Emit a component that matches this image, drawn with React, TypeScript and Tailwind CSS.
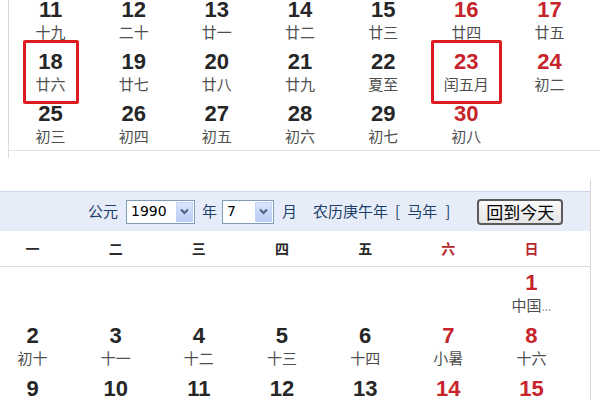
import React from "react";

const RED = "text-[#c6232b]";
const DARK = "text-[#262626]";

type Cell = { n?: string; l?: string; red?: boolean; box?: boolean; dots?: boolean } | null;

const top: Cell[][] = [
  [
    { n: "11", l: "十九" },
    { n: "12", l: "二十" },
    { n: "13", l: "廿一" },
    { n: "14", l: "廿二" },
    { n: "15", l: "廿三" },
    { n: "16", l: "廿四", red: true },
    { n: "17", l: "廿五", red: true },
  ],
  [
    { n: "18", l: "廿六", box: true },
    { n: "19", l: "廿七" },
    { n: "20", l: "廿八" },
    { n: "21", l: "廿九" },
    { n: "22", l: "夏至" },
    { n: "23", l: "闰五月", red: true, box: true },
    { n: "24", l: "初二", red: true },
  ],
  [
    { n: "25", l: "初三" },
    { n: "26", l: "初四" },
    { n: "27", l: "初五" },
    { n: "28", l: "初六" },
    { n: "29", l: "初七" },
    { n: "30", l: "初八", red: true },
    null,
  ],
];

const bottom: Cell[][] = [
  [null, null, null, null, null, null, { n: "1", l: "中国", red: true, dots: true }],
  [
    { n: "2", l: "初十" },
    { n: "3", l: "十一" },
    { n: "4", l: "十二" },
    { n: "5", l: "十三" },
    { n: "6", l: "十四" },
    { n: "7", l: "小暑", red: true },
    { n: "8", l: "十六", red: true },
  ],
  [
    { n: "9", l: "" },
    { n: "10", l: "" },
    { n: "11", l: "" },
    { n: "12", l: "" },
    { n: "13", l: "" },
    { n: "14", l: "", red: true },
    { n: "15", l: "", red: true },
  ],
];

function DateCell({ c }: { c: Cell }) {
  if (!c) return <div />;
  return (
    <div className="flex flex-col items-center pt-[4px]">
      <div className="relative flex flex-col items-center">
        {c.box && (
          <span className="absolute -left-[13px] -right-[13px] -top-[10px] -bottom-[10px] border-[3px] border-[#dc1a1f] rounded-[2px]" />
        )}
        <div
          className={`text-[22px] leading-[24px] font-bold ${c.red ? RED : DARK}`}
          style={{ fontFamily: '"Liberation Sans", Arial, sans-serif' }}
        >
          {c.n}
        </div>
        <div
          className="text-[15px] leading-[20px] text-[#4f4f4f] whitespace-nowrap"
          style={{ fontFamily: '"Noto Sans CJK SC", sans-serif' }}
        >
          {c.l}
          {c.dots && <span className="text-[#999] text-[12px]">...</span>}
        </div>
      </div>
    </div>
  );
}

function Select({ value, width }: { value: string; width: string }) {
  return (
    <div className={`${width} h-[24px] border border-[#7f9db9] bg-white flex items-center justify-between`}>
      <span
        className="pl-[4px] text-[14px] text-black"
        style={{ fontFamily: '"DejaVu Sans", sans-serif' }}
      >
        {value}
      </span>
      <span className="w-[17px] h-[20px] mr-[1px] bg-gradient-to-b from-[#dce6fb] to-[#b8cbf3] border border-[#c3d3fd] flex items-center justify-center">
        <svg width="9" height="7" viewBox="0 0 9 7">
          <path d="M1 1.5 L4.5 5 L8 1.5" fill="none" stroke="#4d6185" strokeWidth="2" />
        </svg>
      </span>
    </div>
  );
}

export default function App() {
  const cjk = { fontFamily: '"Noto Sans CJK SC", sans-serif' };
  return (
    <div className="w-[600px] h-[400px] overflow-hidden bg-white">
      <div className="ml-[8px] h-[158px] border-l border-[#dadada] overflow-hidden">
        <div className="-mt-[6px] border-b border-[#e2e2e2]">
          <div className="w-[582px] grid grid-cols-7">
            {top.map((row, i) =>
              row.map((c, j) => (
                <div key={`${i}-${j}`} className="h-[52px]">
                  <DateCell c={c} />
                </div>
              ))
            )}
          </div>
        </div>
      </div>

      <div className="mt-[22px] pt-[11px] w-[591px] h-[220px] border-r border-[#d6d6d6]">
        <div
          className="h-[40px] bg-[#e7edf8] border-t border-[#cbd7ea] flex items-center pl-[88px] text-[15px] text-[#1d3f6b]"
          style={cjk}
        >
          <span>公元</span>
          <div className="ml-[8px]">
            <Select value="1990" width="w-[69px]" />
          </div>
          <span className="ml-[7px]">年</span>
          <div className="ml-[5px]">
            <Select value="7" width="w-[52px]" />
          </div>
          <span className="ml-[8px]">月</span>
          <span className="ml-[16px] flex items-center">
            <span>农历庚午年</span>
            <span className="ml-[7px]">[</span>
            <span className="ml-[7px]">马年</span>
            <span className="ml-[8px]">]</span>
          </span>
          <button
            className="ml-[27px] w-[86px] h-[26px] border-2 border-[#5a5a5a] rounded-[4px] bg-gradient-to-b from-[#fafafa] to-[#e4e4e4] text-[17px] leading-[20px] text-black flex items-center justify-center"
            style={cjk}
          >
            回到今天
          </button>
        </div>

        <div className="h-[36px] border-b border-[#dcdcdc]">
          <div className="-ml-[9px] w-[582px] h-[35px] grid grid-cols-7 items-center" style={cjk}>
            {["一", "二", "三", "四", "五", "六", "日"].map((d, i) => (
              <div
                key={d}
                className={`text-center text-[14px] font-bold ${i >= 5 ? "text-[#b8262d]" : "text-[#2a2a2a]"}`}
              >
                {d}
              </div>
            ))}
          </div>
        </div>

        <div className="-ml-[9px] w-[582px] grid grid-cols-7">
          {bottom.map((row, i) =>
            row.map((c, j) => (
              <div key={`b${i}-${j}`} className="h-[53px]">
                <DateCell c={c} />
              </div>
            ))
          )}
        </div>
      </div>
    </div>
  );
}
